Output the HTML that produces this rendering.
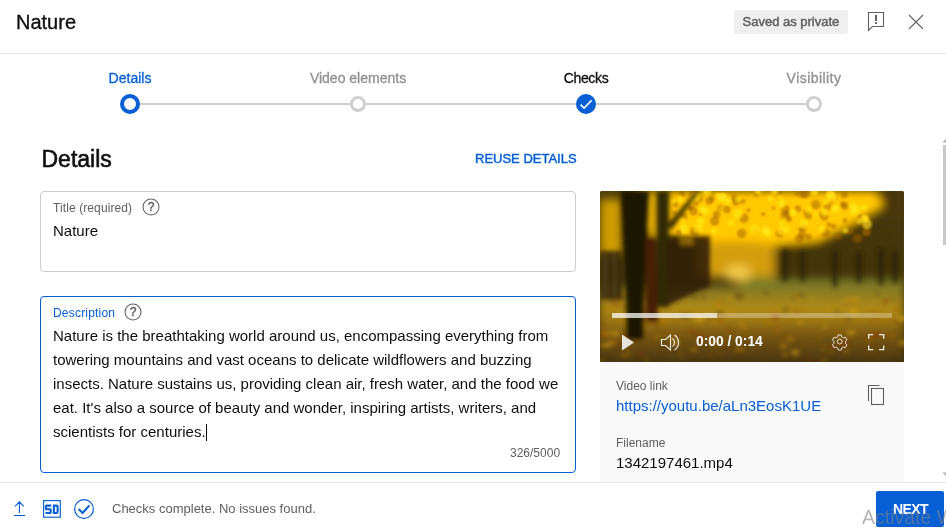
<!DOCTYPE html>
<html><head><meta charset="utf-8">
<style>
*{box-sizing:border-box;margin:0;padding:0}
html,body{width:946px;height:529px;overflow:hidden;font-family:"Liberation Sans",sans-serif;color:#0f0f0f}
.a{position:absolute;white-space:nowrap}
#hdr{left:16px;top:12px;font-size:20px;line-height:20px;color:#0f0f0f;-webkit-text-stroke:0.35px #0f0f0f}
#div1{left:0;top:53px;width:946px;height:1px;background:#e5e5e5}
#chip{left:734px;top:10px;width:114px;height:24px;background:#efefef;border-radius:2px}
#chipt{left:742.5px;top:15px;font-size:13px;line-height:13px;font-weight:400;color:#606060;-webkit-text-stroke:0.45px #606060}
.step{top:71px;font-size:14px;line-height:14px;width:160px;text-align:center;color:#909090;-webkit-text-stroke:0.3px currentColor}
#line{left:130px;top:103px;width:684px;height:2px;background:#cfcfcf}
.dot{position:absolute;border-radius:50%}
#det{left:41.5px;top:148px;font-size:23px;line-height:23px;color:#0f0f0f;-webkit-text-stroke:0.6px #0f0f0f}
#reuse{left:475px;top:152px;font-size:13px;line-height:14px;font-weight:400;color:#065fd4;-webkit-text-stroke:0.45px #065fd4}
.box{position:absolute;border:1px solid #ccc;border-radius:4px}
.lbl{font-size:12px;line-height:12px;color:#606060}
.q{position:absolute;width:17px;height:17px;border:1px solid #606060;border-radius:50%;font-size:12px;line-height:15px;text-align:center;color:#606060;font-weight:700}
.txt{font-size:15px;line-height:15px;color:#0f0f0f}
#desc{left:53px;top:324px;width:515px;font-size:15px;line-height:24px;color:#0f0f0f;white-space:normal}
#video{left:600px;top:191px;width:304px;height:171px;border-radius:2px 2px 0 0;overflow:hidden;background:#5a4a1c}
#card{left:600px;top:362px;width:304px;height:120px;background:#f9f9f9}
#div2{left:0;top:482px;width:946px;height:1px;background:#e5e5e5}
#next{left:876px;top:491px;width:68px;height:36px;background:#065fd4;border-radius:2px}
#nextt{left:893px;top:501.5px;font-size:14px;line-height:14px;font-weight:700;color:#fff;letter-spacing:-0.6px}
#foot{left:112px;top:502px;font-size:13px;line-height:13px;color:#606060}
#wm{left:862px;top:507.5px;font-size:19.5px;line-height:19px;color:rgba(130,130,130,.6)}
#sb{left:943px;top:145px;width:3px;height:100px;background:#c8c8c8}
#root{position:absolute;left:0;top:0;width:946px;height:529px;will-change:transform;background:rgba(255,255,255,0.999)}
html{background:#fff}
</style></head><body><div id="root">
<div class="a" id="hdr">Nature</div>
<div class="a" id="chip"></div>
<div class="a" id="chipt">Saved as private</div>
<svg class="a" style="left:860px;top:8px" width="32" height="32" viewBox="0 0 32 32">
  <path d="M8.5 4.5h15v14h-11l-4 4z" fill="none" stroke="#606060" stroke-width="1.1" stroke-linejoin="miter"/>
  <rect x="15" y="7" width="2" height="6" fill="#606060"/>
  <rect x="15" y="14.2" width="2" height="1.8" fill="#606060"/>
</svg>
<svg class="a" style="left:902px;top:8px" width="28" height="28" viewBox="0 0 28 28">
  <path d="M7 7L21 21M21 7L7 21" stroke="#606060" stroke-width="1.1"/>
</svg>
<div class="a" id="div1"></div>

<div class="a step" style="left:50px;color:#065fd4">Details</div>
<div class="a step" style="left:278px">Video elements</div>
<div class="a step" style="left:506px;color:#0f0f0f;letter-spacing:-0.35px">Checks</div>
<div class="a step" style="left:734px;letter-spacing:0.45px">Visibility</div>
<div class="a" id="line"></div>
<div class="dot" style="left:120px;top:94px;width:20px;height:20px;border:4px solid #065fd4;background:#fff"></div>
<div class="dot" style="left:350px;top:96px;width:16px;height:16px;border:3.8px solid #cfcfcf;background:#fff"></div>
<div class="dot" style="left:576px;top:94px;width:20px;height:20px;background:#065fd4"></div>
<svg class="a" style="left:576px;top:94px" width="20" height="20" viewBox="0 0 20 20"><path d="M4.6 10.6l3.5 3.4 7.6-7.8" fill="none" stroke="#fff" stroke-width="1.6"/></svg>
<div class="dot" style="left:806px;top:96px;width:16px;height:16px;border:3.8px solid #cfcfcf;background:#fff"></div>

<div class="a" id="det">Details</div>
<div class="a" id="reuse">REUSE DETAILS</div>

<div class="box" style="left:40px;top:191px;width:536px;height:81px"></div>
<div class="a lbl" style="left:53px;top:202px;letter-spacing:0.1px">Title (required)</div>
<div class="a txt" style="left:53px;top:223px">Nature</div>
<svg class="a" style="left:142px;top:198px" width="18" height="18" viewBox="0 0 18 18"><circle cx="9" cy="9" r="8" fill="none" stroke="#606060" stroke-width="1.05"/><text x="9" y="13.2" text-anchor="middle" font-family="Liberation Sans" font-size="12" fill="#606060" stroke="#606060" stroke-width="0.4">?</text></svg>

<div class="box" style="left:40px;top:296px;width:536px;height:177px;border-color:#065fd4"></div>
<div class="a lbl" style="left:53px;top:307px;color:#065fd4;letter-spacing:0.2px">Description</div>
<svg class="a" style="left:124px;top:303px" width="18" height="18" viewBox="0 0 18 18"><circle cx="9" cy="9" r="8" fill="none" stroke="#606060" stroke-width="1.05"/><text x="9" y="13.2" text-anchor="middle" font-family="Liberation Sans" font-size="12" fill="#606060" stroke="#606060" stroke-width="0.4">?</text></svg>
<div class="a" id="desc">Nature is the breathtaking world around us, encompassing everything from towering mountains and vast oceans to delicate wildflowers and buzzing insects. Nature sustains us, providing clean air, fresh water, and the food we eat. It's also a source of beauty and wonder, inspiring artists, writers, and scientists for centuries.<span style="display:inline-block;width:1px;height:17px;background:#0f0f0f;vertical-align:-4px"></span></div>
<div class="a lbl" style="left:510px;top:447px">326/5000</div>

<div class="a" id="video"><svg width="304" height="171" viewBox="0 0 304 171" style="position:absolute;left:0;top:0;filter:saturate(1.15) contrast(1.12)">
<defs>
<filter id="bl" x="-10%" y="-10%" width="120%" height="120%"><feGaussianBlur stdDeviation="2.2"/></filter>
<filter id="bl2" x="-20%" y="-20%" width="140%" height="140%"><feGaussianBlur stdDeviation="5"/></filter>
<filter id="bl3" x="-5%" y="-5%" width="110%" height="110%"><feGaussianBlur stdDeviation="1.2"/></filter>
<linearGradient id="gnd" x1="0" y1="0" x2="0" y2="1">
<stop offset="0" stop-color="#7e7838"/><stop offset="0.3" stop-color="#aa8a2e"/><stop offset="0.62" stop-color="#7e6228"/><stop offset="1" stop-color="#5e4a24"/>
</linearGradient>
</defs>
<rect width="304" height="171" fill="#4e4220"/>
<g filter="url(#bl2)">
<rect x="0" y="96" width="304" height="75" fill="url(#gnd)"/>
<rect x="140" y="86" width="164" height="10" fill="#7a7c3a"/>
<rect x="176" y="29" width="128" height="60" fill="#4a3e1c"/>
<rect x="262" y="0" width="42" height="24" fill="#4e3c1a"/>
<path d="M40 0H275L284 14L262 28L218 50L152 56L97 52L70 46L40 40z" fill="#f2c21e"/>
<path d="M95 50h60l20 4v32h-80z" fill="#c49a2c"/>
<ellipse cx="138" cy="82" rx="14" ry="9" fill="#e0be5a"/>
<path d="M0 8h22v58H0z" fill="#c09a1c"/>
<path d="M48 0h22v48H48z" fill="#c09a20"/>
</g>
<g filter="url(#bl3)"><circle cx="134.8" cy="7.2" r="4.0" fill="#94640e" opacity="0.5"/><circle cx="84.5" cy="25.7" r="3.1" fill="#94640e" opacity="0.5"/><circle cx="81.6" cy="24.4" r="2.1" fill="#94640e" opacity="0.5"/><circle cx="156.7" cy="3.4" r="2.3" fill="#94640e" opacity="0.5"/><circle cx="154.9" cy="39.7" r="2.4" fill="#94640e" opacity="0.5"/><circle cx="114.6" cy="30.1" r="4.8" fill="#94640e" opacity="0.5"/><circle cx="185.4" cy="19.0" r="4.9" fill="#94640e" opacity="0.5"/><circle cx="79.3" cy="41.2" r="2.9" fill="#94640e" opacity="0.5"/><circle cx="98.9" cy="5.7" r="2.9" fill="#94640e" opacity="0.5"/><circle cx="233.2" cy="8.7" r="3.7" fill="#94640e" opacity="0.5"/><circle cx="197.8" cy="17.9" r="3.6" fill="#94640e" opacity="0.5"/><circle cx="82.6" cy="2.9" r="2.6" fill="#94640e" opacity="0.5"/><circle cx="206.1" cy="20.5" r="2.9" fill="#94640e" opacity="0.5"/><circle cx="187.1" cy="21.8" r="2.9" fill="#94640e" opacity="0.5"/><circle cx="228.9" cy="33.6" r="2.7" fill="#94640e" opacity="0.5"/><circle cx="184.9" cy="25.2" r="4.6" fill="#94640e" opacity="0.5"/><circle cx="215.9" cy="13.8" r="4.9" fill="#94640e" opacity="0.5"/><circle cx="93.6" cy="20.1" r="4.3" fill="#94640e" opacity="0.5"/><circle cx="100.4" cy="23.5" r="2.1" fill="#94640e" opacity="0.5"/><circle cx="203.6" cy="36.7" r="3.7" fill="#94640e" opacity="0.5"/><circle cx="245.1" cy="15.1" r="4.1" fill="#94640e" opacity="0.5"/><circle cx="188.9" cy="27.8" r="3.4" fill="#94640e" opacity="0.5"/><circle cx="238.0" cy="45.3" r="3.4" fill="#94640e" opacity="0.5"/><circle cx="202.8" cy="2.9" r="4.1" fill="#94640e" opacity="0.5"/><circle cx="199.4" cy="47.7" r="4.5" fill="#94640e" opacity="0.5"/><circle cx="126.9" cy="18.5" r="4.0" fill="#94640e" opacity="0.5"/><circle cx="74.5" cy="22.2" r="2.5" fill="#94640e" opacity="0.5"/><circle cx="93.4" cy="2.8" r="4.3" fill="#94640e" opacity="0.5"/><circle cx="95.9" cy="11.9" r="3.2" fill="#94640e" opacity="0.5"/><circle cx="244.3" cy="3.9" r="3.3" fill="#94640e" opacity="0.5"/><circle cx="179.9" cy="42.4" r="4.5" fill="#94640e" opacity="0.5"/><circle cx="242.8" cy="13.4" r="3.2" fill="#94640e" opacity="0.5"/><circle cx="141.8" cy="42.4" r="4.9" fill="#94640e" opacity="0.5"/><circle cx="100.2" cy="8.5" r="2.7" fill="#94640e" opacity="0.5"/><circle cx="116.7" cy="23.3" r="3.8" fill="#94640e" opacity="0.5"/><circle cx="122.5" cy="0.2" r="3.3" fill="#94640e" opacity="0.5"/><circle cx="143.9" cy="27.2" r="4.9" fill="#94640e" opacity="0.5"/><circle cx="208.1" cy="24.7" r="3.9" fill="#94640e" opacity="0.5"/><circle cx="205.2" cy="2.6" r="4.7" fill="#94640e" opacity="0.5"/><circle cx="226.0" cy="42.0" r="4.4" fill="#94640e" opacity="0.5"/><circle cx="148.5" cy="19.2" r="2.3" fill="#94640e" opacity="0.5"/><circle cx="196.9" cy="3.0" r="2.2" fill="#94640e" opacity="0.5"/><circle cx="111.8" cy="7.8" r="3.0" fill="#94640e" opacity="0.5"/><circle cx="80.5" cy="0.0" r="2.5" fill="#94640e" opacity="0.5"/><circle cx="90.3" cy="17.5" r="2.1" fill="#94640e" opacity="0.5"/><circle cx="244.9" cy="29.5" r="2.4" fill="#94640e" opacity="0.5"/><circle cx="120.5" cy="16.7" r="3.1" fill="#94640e" opacity="0.5"/><circle cx="94.6" cy="40.7" r="5.0" fill="#94640e" opacity="0.5"/><circle cx="163.2" cy="23.2" r="2.3" fill="#94640e" opacity="0.5"/><circle cx="90.4" cy="16.4" r="2.8" fill="#94640e" opacity="0.5"/><circle cx="235.8" cy="7.7" r="2.1" fill="#94640e" opacity="0.5"/><circle cx="260.2" cy="25.4" r="2.4" fill="#94640e" opacity="0.5"/><circle cx="178.6" cy="1.3" r="3.6" fill="#94640e" opacity="0.5"/><circle cx="265.7" cy="41.4" r="4.1" fill="#94640e" opacity="0.5"/><circle cx="122.2" cy="17.6" r="2.5" fill="#94640e" opacity="0.5"/><circle cx="224.4" cy="25.6" r="4.3" fill="#94640e" opacity="0.5"/><circle cx="135.9" cy="10.7" r="4.4" fill="#94640e" opacity="0.5"/><circle cx="267.0" cy="40.9" r="4.4" fill="#94640e" opacity="0.5"/><circle cx="233.7" cy="35.5" r="2.7" fill="#94640e" opacity="0.5"/><circle cx="173.5" cy="17.1" r="2.1" fill="#94640e" opacity="0.5"/><circle cx="75.6" cy="13.4" r="2.8" fill="#94640e" opacity="0.5"/><circle cx="208.5" cy="45.9" r="3.3" fill="#94640e" opacity="0.5"/><circle cx="257.4" cy="47.4" r="4.9" fill="#94640e" opacity="0.5"/><circle cx="142.9" cy="10.6" r="2.7" fill="#94640e" opacity="0.5"/><circle cx="109.3" cy="9.8" r="3.9" fill="#94640e" opacity="0.5"/><circle cx="250.1" cy="40.3" r="3.4" fill="#94640e" opacity="0.5"/><circle cx="200.6" cy="38.4" r="2.3" fill="#94640e" opacity="0.5"/><circle cx="202.1" cy="43.7" r="4.3" fill="#94640e" opacity="0.5"/><circle cx="220.0" cy="22.9" r="2.5" fill="#94640e" opacity="0.5"/><circle cx="227.8" cy="16.0" r="4.4" fill="#94640e" opacity="0.5"/><circle cx="264.3" cy="16.6" r="3.2" fill="#ffe040" opacity="0.6"/><circle cx="259.4" cy="30.4" r="2.5" fill="#ffe040" opacity="0.6"/><circle cx="95.4" cy="6.3" r="4.7" fill="#ffe040" opacity="0.6"/><circle cx="231.3" cy="6.1" r="4.5" fill="#ffe040" opacity="0.6"/><circle cx="266.1" cy="27.6" r="3.1" fill="#ffe040" opacity="0.6"/><circle cx="179.7" cy="5.5" r="2.0" fill="#ffe040" opacity="0.6"/><circle cx="264.2" cy="27.3" r="3.6" fill="#ffe040" opacity="0.6"/><circle cx="256.7" cy="18.2" r="4.6" fill="#ffe040" opacity="0.6"/><circle cx="235.2" cy="8.9" r="2.8" fill="#ffe040" opacity="0.6"/><circle cx="128.6" cy="10.1" r="3.8" fill="#ffe040" opacity="0.6"/><circle cx="121.9" cy="17.6" r="2.4" fill="#ffe040" opacity="0.6"/><circle cx="252.0" cy="14.9" r="3.4" fill="#ffe040" opacity="0.6"/><circle cx="186.7" cy="38.0" r="3.3" fill="#ffe040" opacity="0.6"/><circle cx="253.5" cy="21.1" r="3.6" fill="#ffe040" opacity="0.6"/><circle cx="174.7" cy="0.8" r="3.3" fill="#ffe040" opacity="0.6"/><circle cx="106.6" cy="0.2" r="4.4" fill="#ffe040" opacity="0.6"/><circle cx="104.5" cy="19.9" r="4.2" fill="#ffe040" opacity="0.6"/><circle cx="181.3" cy="13.7" r="3.6" fill="#ffe040" opacity="0.6"/><circle cx="181.1" cy="32.9" r="2.3" fill="#ffe040" opacity="0.6"/><circle cx="182.1" cy="10.4" r="2.8" fill="#ffe040" opacity="0.6"/><circle cx="224.5" cy="21.3" r="3.7" fill="#ffe040" opacity="0.6"/><circle cx="222.0" cy="38.3" r="3.3" fill="#ffe040" opacity="0.6"/><circle cx="192.5" cy="21.2" r="3.5" fill="#ffe040" opacity="0.6"/><circle cx="208.5" cy="19.0" r="3.6" fill="#ffe040" opacity="0.6"/><circle cx="165.6" cy="39.5" r="4.1" fill="#ffe040" opacity="0.6"/><circle cx="245.3" cy="39.6" r="2.8" fill="#ffe040" opacity="0.6"/><circle cx="181.9" cy="39.6" r="4.5" fill="#ffe040" opacity="0.6"/><circle cx="97.4" cy="5.1" r="3.3" fill="#ffe040" opacity="0.6"/><circle cx="84.5" cy="10.1" r="2.2" fill="#ffe040" opacity="0.6"/><circle cx="203.9" cy="32.9" r="4.7" fill="#ffe040" opacity="0.6"/><circle cx="100.9" cy="30.1" r="4.0" fill="#ffe040" opacity="0.6"/><circle cx="98.6" cy="37.1" r="4.9" fill="#ffe040" opacity="0.6"/><circle cx="113.9" cy="40.0" r="3.2" fill="#ffe040" opacity="0.6"/><circle cx="167.5" cy="41.6" r="4.5" fill="#ffe040" opacity="0.6"/><circle cx="102.3" cy="18.1" r="3.5" fill="#ffe040" opacity="0.6"/><circle cx="137.8" cy="8.2" r="3.0" fill="#ffe040" opacity="0.6"/><circle cx="214.4" cy="0.8" r="3.7" fill="#ffe040" opacity="0.6"/><circle cx="158.1" cy="0.8" r="3.0" fill="#ffe040" opacity="0.6"/><circle cx="194.8" cy="21.5" r="2.2" fill="#ffe040" opacity="0.6"/><circle cx="267.0" cy="33.1" r="4.9" fill="#ffe040" opacity="0.6"/><circle cx="91.0" cy="11.2" r="2.1" fill="#ffe040" opacity="0.6"/><circle cx="225.8" cy="11.4" r="2.4" fill="#ffe040" opacity="0.6"/><circle cx="154.5" cy="38.3" r="4.5" fill="#ffe040" opacity="0.6"/><circle cx="121.7" cy="6.3" r="4.8" fill="#ffe040" opacity="0.6"/><circle cx="184.1" cy="29.4" r="2.3" fill="#ffe040" opacity="0.6"/><circle cx="81.5" cy="28.9" r="3.3" fill="#ffe040" opacity="0.6"/><circle cx="84.5" cy="39.4" r="3.9" fill="#ffe040" opacity="0.6"/><circle cx="230.3" cy="3.5" r="4.6" fill="#ffe040" opacity="0.6"/><circle cx="83.3" cy="36.2" r="3.4" fill="#ffe040" opacity="0.6"/><circle cx="137.8" cy="23.2" r="4.8" fill="#ffe040" opacity="0.6"/><circle cx="123.6" cy="5.4" r="3.6" fill="#ffe040" opacity="0.6"/><circle cx="117.7" cy="4.6" r="2.5" fill="#ffe040" opacity="0.6"/><circle cx="80.1" cy="8.5" r="2.9" fill="#ffe040" opacity="0.6"/><circle cx="131.0" cy="31.9" r="2.9" fill="#ffe040" opacity="0.6"/><circle cx="170.0" cy="7.5" r="3.0" fill="#ffe040" opacity="0.6"/><circle cx="73.6" cy="10.5" r="2.0" fill="#ffe040" opacity="0.6"/><circle cx="216.6" cy="23.1" r="2.6" fill="#ffe040" opacity="0.6"/><circle cx="165.0" cy="39.3" r="2.3" fill="#ffe040" opacity="0.6"/><circle cx="233.8" cy="18.2" r="3.5" fill="#ffe040" opacity="0.6"/><circle cx="236.9" cy="16.5" r="3.5" fill="#ffe040" opacity="0.6"/></g>
<g filter="url(#bl)"><ellipse cx="209.1" cy="169.8" rx="3.0" ry="1.8" fill="#8a4a1a" opacity="0.7"/><ellipse cx="123.0" cy="124.7" rx="2.2" ry="1.3" fill="#8a4a1a" opacity="0.7"/><ellipse cx="4.3" cy="144.4" rx="4.6" ry="2.8" fill="#9a6a22" opacity="0.7"/><ellipse cx="49.6" cy="106.0" rx="4.5" ry="2.7" fill="#6a5a2a" opacity="0.7"/><ellipse cx="182.0" cy="149.2" rx="2.1" ry="1.3" fill="#8a4a1a" opacity="0.7"/><ellipse cx="47.9" cy="131.7" rx="2.8" ry="1.7" fill="#7a5a24" opacity="0.7"/><ellipse cx="295.7" cy="138.8" rx="2.7" ry="1.6" fill="#6a5a2a" opacity="0.7"/><ellipse cx="66.2" cy="113.0" rx="3.0" ry="1.8" fill="#6a5222" opacity="0.7"/><ellipse cx="144.3" cy="135.7" rx="2.6" ry="1.6" fill="#b08a2a" opacity="0.7"/><ellipse cx="27.6" cy="158.0" rx="2.4" ry="1.5" fill="#b08a2a" opacity="0.7"/><ellipse cx="119.8" cy="121.3" rx="3.9" ry="2.3" fill="#6a5222" opacity="0.7"/><ellipse cx="178.0" cy="137.6" rx="4.3" ry="2.6" fill="#9a6a22" opacity="0.7"/><ellipse cx="232.4" cy="151.2" rx="3.5" ry="2.1" fill="#6a5a2a" opacity="0.7"/><ellipse cx="220.1" cy="145.7" rx="2.1" ry="1.3" fill="#9a6a22" opacity="0.7"/><ellipse cx="223.1" cy="157.7" rx="2.4" ry="1.5" fill="#b08a2a" opacity="0.7"/><ellipse cx="251.2" cy="141.5" rx="4.7" ry="2.8" fill="#c09a30" opacity="0.7"/><ellipse cx="25.9" cy="103.0" rx="3.9" ry="2.3" fill="#6a5222" opacity="0.7"/><ellipse cx="114.5" cy="132.0" rx="2.2" ry="1.3" fill="#b08a2a" opacity="0.7"/><ellipse cx="190.4" cy="148.3" rx="3.5" ry="2.1" fill="#b08a2a" opacity="0.7"/><ellipse cx="138.9" cy="105.0" rx="4.8" ry="2.9" fill="#6a5222" opacity="0.7"/><ellipse cx="200.4" cy="104.7" rx="4.2" ry="2.5" fill="#6a5a2a" opacity="0.7"/><ellipse cx="246.0" cy="160.1" rx="2.7" ry="1.6" fill="#c09a30" opacity="0.7"/><ellipse cx="70.1" cy="146.1" rx="3.4" ry="2.0" fill="#9a6a22" opacity="0.7"/><ellipse cx="23.3" cy="164.6" rx="2.9" ry="1.7" fill="#b08a2a" opacity="0.7"/><ellipse cx="187.6" cy="145.6" rx="2.2" ry="1.3" fill="#8a4a1a" opacity="0.7"/><ellipse cx="100.9" cy="146.3" rx="4.1" ry="2.4" fill="#8a4a1a" opacity="0.7"/><ellipse cx="3.8" cy="104.3" rx="2.8" ry="1.7" fill="#6a5222" opacity="0.7"/><ellipse cx="210.4" cy="148.0" rx="2.9" ry="1.7" fill="#6a5a2a" opacity="0.7"/><ellipse cx="141.3" cy="133.1" rx="2.4" ry="1.4" fill="#c09a30" opacity="0.7"/><ellipse cx="94.7" cy="106.1" rx="3.4" ry="2.1" fill="#6a5a2a" opacity="0.7"/><ellipse cx="139.5" cy="158.2" rx="4.9" ry="2.9" fill="#a0781e" opacity="0.7"/><ellipse cx="302.2" cy="127.5" rx="4.7" ry="2.8" fill="#c09a30" opacity="0.7"/><ellipse cx="22.7" cy="106.4" rx="4.2" ry="2.5" fill="#6a5a2a" opacity="0.7"/><ellipse cx="289.6" cy="109.4" rx="4.5" ry="2.7" fill="#6a5a2a" opacity="0.7"/><ellipse cx="269.6" cy="149.9" rx="2.7" ry="1.6" fill="#a0781e" opacity="0.7"/><ellipse cx="119.8" cy="111.3" rx="4.8" ry="2.9" fill="#a0781e" opacity="0.7"/><ellipse cx="123.2" cy="151.6" rx="3.2" ry="1.9" fill="#9a6a22" opacity="0.7"/><ellipse cx="96.1" cy="159.7" rx="2.0" ry="1.2" fill="#7a5a24" opacity="0.7"/><ellipse cx="255.1" cy="108.5" rx="4.8" ry="2.9" fill="#b08a2a" opacity="0.7"/><ellipse cx="274.1" cy="120.6" rx="3.1" ry="1.9" fill="#9a6a22" opacity="0.7"/><ellipse cx="118.6" cy="161.8" rx="2.2" ry="1.3" fill="#9a6a22" opacity="0.7"/><ellipse cx="229.7" cy="160.7" rx="2.8" ry="1.7" fill="#b08a2a" opacity="0.7"/><ellipse cx="253.7" cy="120.3" rx="4.8" ry="2.9" fill="#c09a30" opacity="0.7"/><ellipse cx="295.2" cy="131.0" rx="2.9" ry="1.8" fill="#7a5a24" opacity="0.7"/><ellipse cx="238.7" cy="130.4" rx="2.1" ry="1.3" fill="#9a6a22" opacity="0.7"/><ellipse cx="277.7" cy="166.8" rx="3.6" ry="2.2" fill="#6a5222" opacity="0.7"/><ellipse cx="15.0" cy="152.0" rx="3.4" ry="2.0" fill="#8a4a1a" opacity="0.7"/><ellipse cx="195.9" cy="120.3" rx="2.1" ry="1.3" fill="#8a4a1a" opacity="0.7"/><ellipse cx="51.9" cy="129.5" rx="2.8" ry="1.7" fill="#6a5a2a" opacity="0.7"/><ellipse cx="224.7" cy="169.3" rx="2.8" ry="1.7" fill="#c09a30" opacity="0.7"/><ellipse cx="91.5" cy="139.6" rx="3.2" ry="1.9" fill="#8a4a1a" opacity="0.7"/><ellipse cx="195.5" cy="105.3" rx="3.5" ry="2.1" fill="#a0781e" opacity="0.7"/><ellipse cx="167.3" cy="132.2" rx="3.0" ry="1.8" fill="#a0781e" opacity="0.7"/><ellipse cx="129.9" cy="138.9" rx="2.7" ry="1.6" fill="#8a4a1a" opacity="0.7"/><ellipse cx="104.0" cy="106.5" rx="2.7" ry="1.6" fill="#6a5a2a" opacity="0.7"/><ellipse cx="246.0" cy="114.4" rx="2.1" ry="1.2" fill="#9a6a22" opacity="0.7"/><ellipse cx="116.4" cy="153.0" rx="2.6" ry="1.6" fill="#6a5a2a" opacity="0.7"/><ellipse cx="102.8" cy="104.4" rx="2.8" ry="1.7" fill="#7a5a24" opacity="0.7"/><ellipse cx="38.3" cy="135.7" rx="3.9" ry="2.3" fill="#c09a30" opacity="0.7"/><ellipse cx="28.1" cy="163.7" rx="3.2" ry="1.9" fill="#a0781e" opacity="0.7"/><ellipse cx="131.3" cy="122.2" rx="4.4" ry="2.7" fill="#b08a2a" opacity="0.7"/><ellipse cx="38.7" cy="130.2" rx="4.3" ry="2.6" fill="#a0781e" opacity="0.7"/><ellipse cx="294.4" cy="134.8" rx="2.2" ry="1.3" fill="#a0781e" opacity="0.7"/><ellipse cx="295.6" cy="117.6" rx="2.3" ry="1.4" fill="#8a4a1a" opacity="0.7"/><ellipse cx="46.2" cy="169.0" rx="2.3" ry="1.4" fill="#a0781e" opacity="0.7"/><ellipse cx="25.8" cy="155.2" rx="2.0" ry="1.2" fill="#8a4a1a" opacity="0.7"/><ellipse cx="70.7" cy="165.3" rx="3.9" ry="2.4" fill="#6a5a2a" opacity="0.7"/><ellipse cx="292.6" cy="144.5" rx="3.6" ry="2.2" fill="#9a6a22" opacity="0.7"/><ellipse cx="212.4" cy="108.0" rx="2.2" ry="1.3" fill="#c09a30" opacity="0.7"/><ellipse cx="118.0" cy="115.9" rx="3.8" ry="2.3" fill="#b08a2a" opacity="0.7"/><ellipse cx="163.4" cy="170.7" rx="2.8" ry="1.7" fill="#7a5a24" opacity="0.7"/><ellipse cx="196.0" cy="162.7" rx="3.4" ry="2.1" fill="#c09a30" opacity="0.7"/><ellipse cx="166.3" cy="102.1" rx="3.2" ry="1.9" fill="#6a5a2a" opacity="0.7"/><ellipse cx="16.8" cy="113.8" rx="4.7" ry="2.8" fill="#9a6a22" opacity="0.7"/><ellipse cx="24.7" cy="116.2" rx="3.3" ry="2.0" fill="#7a5a24" opacity="0.7"/><ellipse cx="68.9" cy="102.4" rx="3.0" ry="1.8" fill="#9a6a22" opacity="0.7"/><ellipse cx="110.1" cy="128.1" rx="2.0" ry="1.2" fill="#6a5a2a" opacity="0.7"/><ellipse cx="224.7" cy="135.8" rx="2.6" ry="1.6" fill="#c09a30" opacity="0.7"/><ellipse cx="94.8" cy="158.2" rx="2.7" ry="1.6" fill="#c09a30" opacity="0.7"/><ellipse cx="80.6" cy="163.1" rx="2.3" ry="1.4" fill="#a0781e" opacity="0.7"/><ellipse cx="185.5" cy="163.6" rx="3.5" ry="2.1" fill="#b08a2a" opacity="0.7"/><ellipse cx="288.4" cy="110.4" rx="3.2" ry="1.9" fill="#c09a30" opacity="0.7"/><ellipse cx="7.2" cy="142.3" rx="3.2" ry="1.9" fill="#b08a2a" opacity="0.7"/><ellipse cx="56.0" cy="131.9" rx="4.1" ry="2.5" fill="#7a5a24" opacity="0.7"/><ellipse cx="222.7" cy="170.8" rx="4.8" ry="2.9" fill="#7a5a24" opacity="0.7"/><ellipse cx="58.0" cy="146.3" rx="3.6" ry="2.1" fill="#a0781e" opacity="0.7"/><ellipse cx="9.7" cy="147.2" rx="3.1" ry="1.9" fill="#7a5a24" opacity="0.7"/><ellipse cx="299.4" cy="131.4" rx="2.3" ry="1.4" fill="#6a5222" opacity="0.7"/><ellipse cx="85.1" cy="125.0" rx="4.9" ry="2.9" fill="#6a5222" opacity="0.7"/><ellipse cx="170.6" cy="153.9" rx="3.1" ry="1.9" fill="#6a5a2a" opacity="0.7"/><ellipse cx="249.9" cy="130.7" rx="2.1" ry="1.3" fill="#a0781e" opacity="0.7"/><ellipse cx="59.5" cy="138.4" rx="3.3" ry="2.0" fill="#7a5a24" opacity="0.7"/><ellipse cx="110.7" cy="163.7" rx="2.1" ry="1.3" fill="#9a6a22" opacity="0.7"/><ellipse cx="75.4" cy="144.4" rx="3.2" ry="1.9" fill="#9a6a22" opacity="0.7"/><ellipse cx="10.6" cy="104.4" rx="4.8" ry="2.9" fill="#6a5a2a" opacity="0.7"/><ellipse cx="59.3" cy="104.5" rx="3.8" ry="2.3" fill="#7a5a24" opacity="0.7"/><ellipse cx="82.8" cy="168.0" rx="3.9" ry="2.3" fill="#6a5a2a" opacity="0.7"/><ellipse cx="226.9" cy="149.0" rx="4.8" ry="2.9" fill="#6a5a2a" opacity="0.7"/><ellipse cx="1.1" cy="153.7" rx="4.7" ry="2.8" fill="#6a5222" opacity="0.7"/><ellipse cx="7.4" cy="116.6" rx="3.4" ry="2.1" fill="#a0781e" opacity="0.7"/><ellipse cx="290.0" cy="127.4" rx="2.8" ry="1.7" fill="#9a6a22" opacity="0.7"/><ellipse cx="247.7" cy="109.4" rx="3.5" ry="2.1" fill="#b08a2a" opacity="0.7"/><ellipse cx="244.0" cy="152.4" rx="4.5" ry="2.7" fill="#8a4a1a" opacity="0.7"/><ellipse cx="184.6" cy="123.3" rx="3.0" ry="1.8" fill="#7a5a24" opacity="0.7"/><ellipse cx="238.3" cy="142.3" rx="3.5" ry="2.1" fill="#9a6a22" opacity="0.7"/><ellipse cx="228.9" cy="117.6" rx="2.2" ry="1.3" fill="#b08a2a" opacity="0.7"/><ellipse cx="146.4" cy="138.7" rx="2.5" ry="1.5" fill="#9a6a22" opacity="0.7"/><ellipse cx="268.6" cy="170.1" rx="2.8" ry="1.7" fill="#6a5222" opacity="0.7"/><ellipse cx="63.3" cy="129.9" rx="5.0" ry="3.0" fill="#a0781e" opacity="0.7"/><ellipse cx="52.7" cy="109.4" rx="3.4" ry="2.0" fill="#c09a30" opacity="0.7"/><ellipse cx="227.4" cy="160.1" rx="4.0" ry="2.4" fill="#6a5222" opacity="0.7"/><ellipse cx="237.0" cy="120.9" rx="2.8" ry="1.7" fill="#6a5a2a" opacity="0.7"/><ellipse cx="113.4" cy="152.4" rx="2.6" ry="1.6" fill="#c09a30" opacity="0.7"/><ellipse cx="56.5" cy="116.7" rx="2.8" ry="1.7" fill="#c09a30" opacity="0.7"/><ellipse cx="99.2" cy="128.1" rx="5.0" ry="3.0" fill="#c09a30" opacity="0.7"/><ellipse cx="197.5" cy="107.1" rx="3.4" ry="2.0" fill="#b08a2a" opacity="0.7"/><ellipse cx="31.1" cy="133.7" rx="4.5" ry="2.7" fill="#a0781e" opacity="0.7"/><ellipse cx="278.0" cy="102.9" rx="2.9" ry="1.7" fill="#6a5222" opacity="0.7"/><ellipse cx="15.3" cy="142.6" rx="4.5" ry="2.7" fill="#c09a30" opacity="0.7"/><ellipse cx="282.8" cy="126.4" rx="4.6" ry="2.8" fill="#a0781e" opacity="0.7"/><ellipse cx="183.3" cy="155.0" rx="4.0" ry="2.4" fill="#b08a2a" opacity="0.7"/><ellipse cx="32.2" cy="142.3" rx="3.9" ry="2.3" fill="#c09a30" opacity="0.7"/><ellipse cx="11.4" cy="124.1" rx="2.1" ry="1.3" fill="#6a5a2a" opacity="0.7"/><ellipse cx="11.6" cy="152.0" rx="4.7" ry="2.8" fill="#b08a2a" opacity="0.7"/><ellipse cx="248.9" cy="129.0" rx="3.1" ry="1.9" fill="#6a5a2a" opacity="0.7"/><ellipse cx="23.7" cy="102.2" rx="3.5" ry="2.1" fill="#a0781e" opacity="0.7"/><ellipse cx="19.2" cy="107.2" rx="3.2" ry="1.9" fill="#8a4a1a" opacity="0.7"/><ellipse cx="194.3" cy="106.5" rx="2.5" ry="1.5" fill="#6a5a2a" opacity="0.7"/><ellipse cx="124.6" cy="120.1" rx="2.9" ry="1.8" fill="#b08a2a" opacity="0.7"/><ellipse cx="95.0" cy="140.2" rx="3.1" ry="1.8" fill="#9a6a22" opacity="0.7"/><ellipse cx="5.5" cy="154.4" rx="4.4" ry="2.6" fill="#c09a30" opacity="0.7"/><ellipse cx="118.8" cy="128.8" rx="4.8" ry="2.9" fill="#9a6a22" opacity="0.7"/><ellipse cx="274.1" cy="130.1" rx="4.5" ry="2.7" fill="#9a6a22" opacity="0.7"/><ellipse cx="175.6" cy="125.9" rx="4.3" ry="2.6" fill="#8a4a1a" opacity="0.7"/><ellipse cx="4.5" cy="139.2" rx="3.9" ry="2.4" fill="#9a6a22" opacity="0.7"/><ellipse cx="27.1" cy="144.2" rx="3.1" ry="1.9" fill="#8a4a1a" opacity="0.7"/><ellipse cx="44.3" cy="120.1" rx="3.6" ry="2.1" fill="#6a5222" opacity="0.7"/><ellipse cx="33.1" cy="134.8" rx="4.4" ry="2.6" fill="#c09a30" opacity="0.7"/><ellipse cx="91.7" cy="159.4" rx="2.1" ry="1.3" fill="#a0781e" opacity="0.7"/><ellipse cx="95.6" cy="143.1" rx="3.9" ry="2.3" fill="#6a5222" opacity="0.7"/><ellipse cx="274.9" cy="144.0" rx="4.5" ry="2.7" fill="#8a4a1a" opacity="0.7"/><ellipse cx="194.7" cy="160.8" rx="3.9" ry="2.3" fill="#c09a30" opacity="0.7"/><ellipse cx="252.1" cy="113.0" rx="2.7" ry="1.6" fill="#9a6a22" opacity="0.7"/><ellipse cx="285.3" cy="111.1" rx="3.1" ry="1.8" fill="#8a4a1a" opacity="0.7"/><ellipse cx="75.1" cy="151.5" rx="4.7" ry="2.8" fill="#b08a2a" opacity="0.7"/><ellipse cx="268.7" cy="159.8" rx="4.0" ry="2.4" fill="#7a5a24" opacity="0.7"/><ellipse cx="35.8" cy="142.6" rx="3.7" ry="2.2" fill="#6a5a2a" opacity="0.7"/><ellipse cx="197.3" cy="121.9" rx="2.7" ry="1.6" fill="#9a6a22" opacity="0.7"/><ellipse cx="200.3" cy="131.7" rx="3.3" ry="2.0" fill="#b08a2a" opacity="0.7"/><ellipse cx="1.1" cy="170.0" rx="3.4" ry="2.0" fill="#a0781e" opacity="0.7"/><ellipse cx="232.1" cy="155.4" rx="3.4" ry="2.0" fill="#8a4a1a" opacity="0.7"/><ellipse cx="246.4" cy="128.4" rx="2.2" ry="1.3" fill="#7a5a24" opacity="0.7"/><ellipse cx="130.9" cy="106.5" rx="3.3" ry="2.0" fill="#b08a2a" opacity="0.7"/><ellipse cx="12.4" cy="109.2" rx="4.8" ry="2.9" fill="#7a5a24" opacity="0.7"/><ellipse cx="236.4" cy="136.3" rx="2.2" ry="1.3" fill="#9a6a22" opacity="0.7"/><ellipse cx="198.4" cy="155.7" rx="2.1" ry="1.2" fill="#6a5222" opacity="0.7"/><ellipse cx="302.8" cy="152.0" rx="4.4" ry="2.7" fill="#c09a30" opacity="0.7"/><ellipse cx="40.0" cy="162.9" rx="2.9" ry="1.7" fill="#8a4a1a" opacity="0.7"/><ellipse cx="208.6" cy="151.2" rx="2.7" ry="1.6" fill="#7a5a24" opacity="0.7"/><ellipse cx="185.6" cy="117.9" rx="3.0" ry="1.8" fill="#6a5a2a" opacity="0.7"/></g>
<g filter="url(#bl)">
<path d="M0 60h22v48H0z" fill="#3e3018" opacity="0.9"/>
<path d="M4 62h3v44H4zM13 60h3v46h-3z" fill="#6a5a40" opacity="0.5"/>
<path d="M66 45h44v50l-44 20z" fill="#38281a" opacity="0.9"/>
<path d="M80 46h12l2 8H80z" fill="#b08a20" opacity="0.6"/>
<path d="M21 0h28l-2 40l-3 60l-1 48h-16l-1-48l-3-60z" fill="#28200f"/>
<path d="M45 48h11l2 82h-12z" fill="#4a2c16"/>
<path d="M57 0h12l-1 116h-11z" fill="#383214"/>
<path d="M68 33L96 0h4L71 39z" fill="#3a3014"/>
<path d="M182 58h6v32h-6zM200 60h5v30h-5zM232 60h6v36h-6zM256 62h6v30h-6zM278 58h6v36h-6zM292 60h6v32h-6z" fill="#2e2a12" opacity="0.6"/>
</g>
</svg>
<div style="position:absolute;left:0;top:130px;width:304px;height:41px;background:linear-gradient(rgba(0,0,0,0),rgba(0,0,0,.18))"></div>
<div style="position:absolute;left:12px;top:122px;width:280px;height:5px;background:rgba(255,255,255,.3)"></div>
<div style="position:absolute;left:12px;top:122px;width:105px;height:5px;background:rgba(255,255,255,.62)"></div>
<svg style="position:absolute;left:0;top:130px" width="304" height="41" viewBox="0 0 304 41">
<path d="M22 13.5v16l12-8z" fill="#fff" opacity="0.85"/>
<path d="M61.5 18.5h4l5-4.5v15l-5-4.5h-4z" fill="none" stroke="#fff" stroke-width="1.1" opacity="0.9"/>
<path d="M72.5 17.5a5 5 0 0 1 0 8" fill="none" stroke="#fff" stroke-width="1.1" opacity="0.9"/>
<path d="M74.5 14a9 9 0 0 1 0 15" fill="none" stroke="#fff" stroke-width="1.1" opacity="0.9"/>
<g transform="translate(239.7 20.6) scale(0.93)" fill="none" stroke="#fff" stroke-width="1" opacity="0.9">
<path d="M-1.6 -7.2h3.2l.6 2.1 1.9 1.1 2.1-.6 1.6 2.8-1.5 1.6v2.2l1.5 1.6-1.6 2.8-2.1-.6-1.9 1.1-.6 2.1h-3.2l-.6-2.1-1.9-1.1-2.1.6-1.6-2.8 1.5-1.6v-2.2l-1.5-1.6 1.6-2.8 2.1.6 1.9-1.1z"/>
<circle r="2.6"/>
</g>
<path d="M268.7 17.8v-4.2h4.6M279.1 13.6h4.6v4.2M283.7 24.4v4.2h-4.6M273.3 28.6h-4.6v-4.2" fill="none" stroke="#fff" stroke-width="1.3" opacity="0.9"/>
</svg>
<div style="position:absolute;left:96px;top:143.5px;font-size:13.8px;line-height:14px;font-weight:700;color:#fff;white-space:nowrap">0:00 / 0:14</div>
</div>
<div class="a" id="card"></div>
<div class="a lbl" style="left:616px;top:380px">Video link</div>
<div class="a txt" style="left:616px;top:398px;color:#065fd4">https://youtu.be/aLn3EosK1UE</div>
<div class="a lbl" style="left:616px;top:437px">Filename</div>
<div class="a txt" style="left:616px;top:455px">1342197461.mp4</div>

<svg class="a" style="left:864px;top:382px" width="24" height="26" viewBox="0 0 24 26">
<path d="M4.5 19V3.5h11" fill="none" stroke="#606060" stroke-width="1.1"/>
<rect x="7.5" y="6.5" width="12" height="16" fill="none" stroke="#606060" stroke-width="1.1"/>
</svg>
<div class="a" id="div2"></div>
<svg class="a" style="left:8px;top:497px" width="90" height="24" viewBox="0 0 90 24">
<path d="M11.4 16V4.8M7 9.3l4.4-4.5 4.4 4.5M6 18.5h11" fill="none" stroke="#065fd4" stroke-width="1.1"/>
<rect x="35.6" y="3.6" width="16.7" height="16.6" fill="none" stroke="#065fd4" stroke-width="1.15"/>
<path d="M43.2 8.65H38.6Q37.95 8.65 37.95 9.3V11.65Q37.95 12.3 38.6 12.3H42.1Q42.75 12.3 42.75 12.95V15.3Q42.75 15.95 42.1 15.95H37.5M45.9 8.65H48.4Q49.65 8.65 49.65 9.9V14.7Q49.65 15.95 48.4 15.95H45.9Z" fill="none" stroke="#065fd4" stroke-width="2.1"/>
<circle cx="76" cy="12" r="9.4" fill="none" stroke="#065fd4" stroke-width="1.2"/>
<path d="M70.6 12l4 4 6.8-7.6" fill="none" stroke="#065fd4" stroke-width="2.1"/>
</svg>
<div class="a" id="foot">Checks complete. No issues found.</div>
<div class="a" id="next"></div>
<div class="a" id="nextt">NEXT</div>
<div class="a" id="wm">Activate W</div>
<div class="a" id="sb"></div>
<svg class="a" style="left:942px;top:138px" width="4" height="5"><path d="M0.5 4.5L4 0.8V4.5z" fill="#b0b0b0"/></svg>
<svg class="a" style="left:942px;top:472px" width="4" height="5"><path d="M0.5 0.5L4 4.2V0.5z" fill="#b0b0b0"/></svg>
</div></body></html>
